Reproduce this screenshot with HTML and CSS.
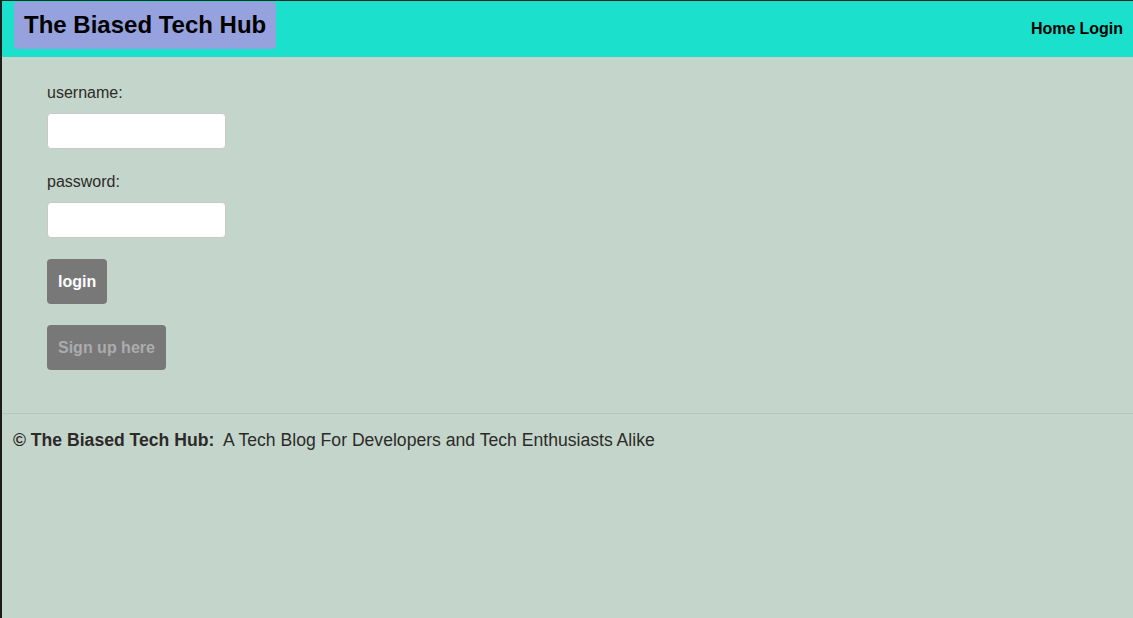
FILE: index.html
```html
<!DOCTYPE html>
<html lang="en">
<head>
<meta charset="utf-8">
<title>The Biased Tech Hub</title>
<link rel="stylesheet" href="styles.css">
</head>
<body>
<header class="site-header">
  <h1 class="brand">The Biased Tech Hub</h1>
  <nav class="nav">
    <a href="#" class="nav-link">Home</a>
    <a href="#" class="nav-link">Login</a>
  </nav>
</header>
<main class="content">
  <form class="login-form">
    <label class="field-label" for="username">username:</label>
    <input class="field-input" id="username" type="text">
    <label class="field-label" for="password">password:</label>
    <input class="field-input last" id="password" type="password">
    <button class="btn" type="button">login</button>
    <button class="btn btn-muted" type="button">Sign up here</button>
  </form>
</main>
<footer class="site-footer">
  <strong>© The Biased Tech Hub:</strong>&nbsp; A Tech Blog For Developers and Tech Enthusiasts Alike
</footer>
</body>
</html>
```
FILE: styles.css
```css
html, body {
  height: 100%;
}
body {
  margin: 0;
  box-sizing: border-box;
  background: #c4d6cb;
  border-top: 1px solid #222;
  border-left: 2px solid #1c1c1c;
  font-family: "Liberation Sans", Arial, sans-serif;
  color: #2e2a28;
}
.site-header {
  display: flex;
  justify-content: space-between;
  align-items: flex-start;
  height: 56px;
  background: #1ae0cc;
  padding: 1px 10px 0 12px;
  box-sizing: border-box;
}
.brand {
  margin: 0;
  background: #96a2de;
  border-radius: 4px;
  font-size: 24px;
  font-weight: bold;
  color: #000;
  padding: 10px 10px 11px 10px;
  line-height: 26px;
  white-space: nowrap;
}
.nav {
  display: flex;
  gap: 4px;
  align-self: center;
  margin-top: -2px;
}
.nav-link {
  color: #000;
  font-weight: bold;
  font-size: 16px;
  text-decoration: none;
}
.content {
  padding: 27px 45px 43px;
}
.login-form {
  display: flex;
  flex-direction: column;
  align-items: flex-start;
}
.field-label {
  font-size: 16px;
  line-height: 18px;
  margin-bottom: 11px;
}
.field-input {
  width: 179px;
  height: 36px;
  box-sizing: border-box;
  border: 1px solid #c9c9c9;
  border-radius: 4px;
  background: #fff;
  margin: 0 0 24px;
}
.field-input.last {
  margin-bottom: 21px;
}
.btn {
  height: 45px;
  padding: 0 11px;
  border: none;
  border-radius: 4px;
  background: #787878;
  color: #fff;
  font-family: "Liberation Sans", Arial, sans-serif;
  font-weight: bold;
  font-size: 16px;
  margin-bottom: 21px;
  cursor: pointer;
}
.btn:last-child {
  margin-bottom: 0;
}
.btn-muted {
  color: #acacac;
}
.site-footer {
  border-top: 1px solid #b6c8bd;
  padding: 16px 11px;
  font-size: 17.6px;
  line-height: 20px;
}
```
